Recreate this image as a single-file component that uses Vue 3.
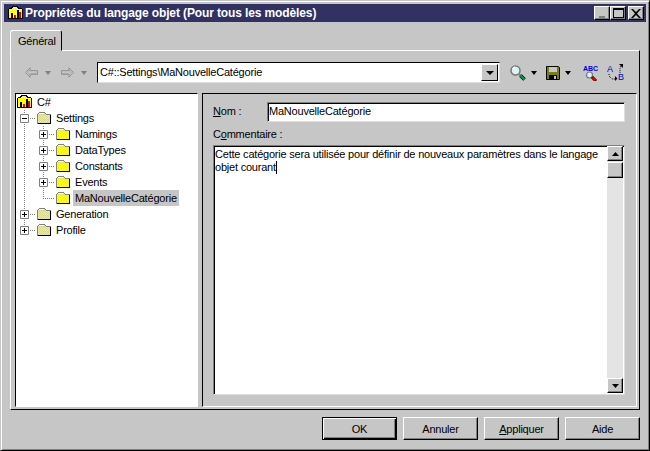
<script setup>
const checker = (x0, y0, w, h) => {
  let d = ''
  for (let y = y0; y < y0 + h; y++) {
    for (let x = x0; x < x0 + w; x++) {
      if ((x + y) % 2 === 0) d += `M${x} ${y}h1v1h-1z`
    }
  }
  return d
}
const folderDither = checker(2, 4, 12, 8)
const modelDither = checker(1, 3, 13, 9)

const tree = [
  { label: 'C#', depth: 0, icon: 'model' },
  { label: 'Settings', depth: 0, icon: 'gray', box: 'minus' },
  { label: 'Namings', depth: 1, icon: 'yellow', box: 'plus' },
  { label: 'DataTypes', depth: 1, icon: 'yellow', box: 'plus' },
  { label: 'Constants', depth: 1, icon: 'yellow', box: 'plus' },
  { label: 'Events', depth: 1, icon: 'yellow', box: 'plus' },
  { label: 'MaNouvelleCatégorie', depth: 1, icon: 'yellow', selected: true },
  { label: 'Generation', depth: 0, icon: 'gray', box: 'plus' },
  { label: 'Profile', depth: 0, icon: 'gray', box: 'plus' },
]
</script>

<template>
  <div class="window">
    <div class="titlebar">
      <svg class="appicon" width="15" height="14" viewBox="0 0 15 14" shape-rendering="crispEdges">
        <path d="M.5 3.500l1-1h2l1-2h5l1 2h3l1 1v9h-14z" fill="#e4e4e4" stroke="#000"/>
        <path :d="modelDither" fill="#ffff00"/>
        <path d="M3 7h2v5H3z" fill="#000"/><path d="M6 9h2v3H6z" fill="#e00000"/><path d="M9 4h2v8H9z" fill="#000"/><path d="M11 6h2v6h-2z" fill="#e00000"/>
      </svg>
      <span class="title">Propriétés du langage objet (Pour tous les modèles)</span>
      <div class="caption-btns">
        <span class="cap"><i class="min"></i></span>
        <span class="cap"><i class="max"></i></span>
        <span class="cap close"><svg width="10" height="9" viewBox="0 0 10 9"><path d="M0 0h2l3 3 3-3h2L6 4.500 10 9H8L5 6 2 9H0l4-4.500z" fill="#000"/></svg></span>
      </div>
    </div>

    <div class="body">
      <div class="tabs"><div class="tab">Général</div></div>
      <div class="panel">
        <div class="toolbar">
          <div class="nav">
            <svg width="14" height="11" viewBox="0 0 14 11"><path d="M5.500.500L.5 5.500l5 5v-3h8v-4h-8z" fill="#c6c6c6" stroke="#8c8c8c"/><path d="M5 3L3 5.500l2 2" fill="none" stroke="#a6a6a6"/><path d="M6 6.500h7" stroke="#a6a6a6"/></svg>
            <svg class="drop" width="6" height="4" viewBox="0 0 6 4"><path d="M0 0h6L3 4z" fill="#808080"/></svg>
            <svg width="14" height="11" viewBox="0 0 14 11"><path d="M8.500.500l5 5-5 5v-3h-8v-4h8z" fill="#c6c6c6" stroke="#8c8c8c"/><path d="M9 3l2 2.500-2 2" fill="none" stroke="#a6a6a6"/><path d="M1 6.500h7" stroke="#a6a6a6"/></svg>
            <svg class="drop" width="6" height="4" viewBox="0 0 6 4"><path d="M0 0h6L3 4z" fill="#808080"/></svg>
          </div>
          <div class="combo">
            <span class="combo-text">C#::Settings\MaNouvelleCatégorie</span>
            <span class="combo-btn"><svg width="8" height="4" viewBox="0 0 8 4"><path d="M0 0h8L4 4z" fill="#000"/></svg></span>
          </div>
          <div class="tools">
            <svg class="mag" width="16" height="16" viewBox="0 0 16 16">
              <circle cx="5.500" cy="5.500" r="4.500" fill="#d8f4f4" stroke="#777" stroke-width="1.500"/>
              <path d="M3 4a3 3 0 0 1 2-2" fill="none" stroke="#fff" stroke-width="1.500"/>
              <path d="M9 9l2 2" stroke="#808080" stroke-width="2"/>
              <path d="M10.500 10.500l4 4" stroke="#000" stroke-width="3.500"/>
              <path d="M10.500 10.500l4 4" stroke="#00a050" stroke-width="2.200"/>
            </svg>
            <svg class="drop" width="6" height="4" viewBox="0 0 6 4"><path d="M0 0h6L3 4z" fill="#000"/></svg>
            <svg class="disk" width="14" height="14" viewBox="0 0 14 14">
              <path d="M.5.500h12l1 1v12H.5z" fill="#808000" stroke="#000"/>
              <path d="M3 1h8v5H3z" fill="#c6c6c6"/>
              <path d="M3 9h8v5H3z" fill="#000"/><path d="M8 10h2v3H8z" fill="#c6c6c6"/>
            </svg>
            <svg class="drop" width="6" height="4" viewBox="0 0 6 4"><path d="M0 0h6L3 4z" fill="#000"/></svg>
            <svg class="abc" width="16" height="16" viewBox="0 0 16 16">
              <text x="0" y="6" class="icon-text">ABC</text>
              <circle cx="6.500" cy="10" r="3" fill="#d8f4f4" stroke="#777" stroke-width="1.200"/>
              <path d="M9 12l4 4" stroke="#000" stroke-width="3"/>
              <path d="M9.500 12.500l3 3" stroke="#f00000" stroke-width="2"/>
            </svg>
            <svg class="ab" width="18" height="17" viewBox="0 0 18 17">
              <text x="0" y="8" class="icon-letter">A</text>
              <text x="11" y="16" class="icon-letter">B</text>
              <path d="M2 10v2l3 3h4M14 2l-1 2v5" fill="none" stroke="#000" stroke-dasharray="1 1"/>
              <path d="M8 12v5l2.500-2.500z" fill="#000"/>
              <path d="M12 0h4v4z" fill="#000"/>
            </svg>
          </div>
        </div>

        <div class="content">
          <div class="tree">
            <svg class="guides" width="60" height="140" viewBox="0 0 60 140">
              <path class="dot" d="M8.500 16V136M27.500 32V104"/>
              <path class="dot" d="M8 24.500h12M8 120.500h12M8 136.500h12M27 40.500h12M27 56.500h12M27 72.500h12M27 88.500h12M27 104.500h12"/>
            </svg>
            <div v-for="n in tree" :key="n.label" class="row" :class="'d' + n.depth">
              <span v-if="n.box" class="box">
                <svg width="9" height="9" viewBox="0 0 9 9">
                  <path d="M.5.500h8v8h-8z" fill="#fff" stroke="#808080"/>
                  <path d="M2 4.500h5" stroke="#000"/>
                  <path v-if="n.box === 'plus'" d="M4.500 2v5" stroke="#000"/>
                </svg>
              </span>
              <span v-else-if="n.depth" class="box"></span>
              <svg v-if="n.icon === 'model'" class="model" width="15" height="14" viewBox="0 0 15 14" shape-rendering="crispEdges">
                <path d="M.5 3.500l1-1h2l1-2h5l1 2h3l1 1v9h-14z" fill="#e4e4e4" stroke="#000"/>
                <path :d="modelDither" fill="#ffff00"/>
                <path d="M3 7h2v5H3z" fill="#000"/><path d="M6 9h2v3H6z" fill="#e00000"/><path d="M9 4h2v8H9z" fill="#000"/><path d="M11 6h2v6h-2z" fill="#e00000"/>
              </svg>
              <svg v-else class="folder" width="16" height="14" viewBox="0 0 16 14" shape-rendering="crispEdges">
                <path d="M1.500 3.500l2-2h5l2 2h3.500v8.500h-12.500z" :fill="n.icon === 'yellow' ? '#e8e870' : '#dcdc90'" stroke="#808080"/>
                <path :d="folderDither" fill="#ffff00"/>
                <path d="M3 2.500h5" stroke="#fff"/>
                <path d="M1.500 12.500h13M14.500 4v9" stroke="#000"/>
              </svg>
              <span class="label" :class="{ selected: n.selected }">{{ n.label }}</span>
            </div>
          </div>

          <div class="detail">
            <div class="field-row">
              <label class="nom"><u>N</u>om :</label>
              <div class="input">MaNouvelleCatégorie</div>
            </div>
            <div class="comment-label">C<u>o</u>mmentaire :</div>
            <div class="textarea">
              <div class="text">Cette catégorie sera utilisée pour définir de nouveaux paramètres dans le langage objet courant<span class="caret"></span></div>
              <div class="scrollbar">
                <span class="sb-btn"><svg width="7" height="4" viewBox="0 0 7 4"><path d="M3.500 0L7 4H0z" fill="#000"/></svg></span>
                <span class="sb-btn thumb"></span>
                <span class="sb-track"></span>
                <span class="sb-btn"><svg width="7" height="4" viewBox="0 0 7 4"><path d="M0 0h7L3.500 4z" fill="#000"/></svg></span>
              </div>
            </div>
          </div>
        </div>
      </div>
      <div class="footer">
        <button class="btn default">OK</button>
        <button class="btn">Annuler</button>
        <button class="btn"><u>A</u>ppliquer</button>
        <button class="btn">Aide</button>
      </div>
    </div>
  </div>
</template>

<style>
html, body { margin: 0; background: #c6c6c6; }
</style>

<style scoped>
.window {
  width: 650px; height: 451px; box-sizing: border-box; background: #c6c6c6;
  border: 1px solid; border-color: #c6c6c6 #000 #000 #c6c6c6;
  box-shadow: inset 1px 1px 0 #fff, inset -1px -1px 0 #808080;
  padding: 3px; font: 11px/1.2 "Liberation Sans", Arial, sans-serif; letter-spacing: -.21px; color: #000;
  display: flex; flex-direction: column; overflow: hidden;
}
.titlebar { height: 18px; background: #313163; color: #fff; display: flex; align-items: center; padding: 0 2px 0 4px; flex: none; }
.appicon { flex: none; margin-right: 2px; }
.title { font: 700 12px "Liberation Sans", Arial, sans-serif; flex: 1; white-space: nowrap; letter-spacing: -.12px; }
.caption-btns { display: flex; }
.cap { width: 16px; height: 14px; box-sizing: border-box; background: #c6c6c6; border: 1px solid; border-color: #fff #000 #000 #fff; box-shadow: inset -1px -1px 0 #808080; display: flex; align-items: center; justify-content: center; }
.close { margin-left: 2px; }
.min { width: 6px; height: 2px; background: #808080; margin-top: 7px; margin-right: 1px; }
.max { width: 9px; height: 7px; border: 1px solid #000; border-top-width: 2px; box-sizing: content-box; }

.body { flex: 1; min-height: 0; display: flex; flex-direction: column; padding: 7px 6px 0 6px; }
.tabs { height: 21px; display: flex; align-items: flex-end; flex: none; }
.tab { height: 21px; box-sizing: border-box; width: 52px; background: #c6c6c6; border: 1px solid; border-color: #fff #000 #c6c6c6 #fff; border-radius: 3px 3px 0 0; padding: 4px 0 0 7px; margin-bottom: -1px; position: relative; z-index: 1; }
.panel { height: 360px; box-sizing: border-box; flex: none; border: 1px solid; border-color: #fff #000 #000 #fff; padding: 0 2px 0 4px; display: flex; flex-direction: column; }
.toolbar { height: 42px; display: flex; align-items: center; flex: none; padding-top: 1px; box-sizing: border-box; }
.nav { width: 82px; padding-left: 10px; box-sizing: border-box; display: flex; align-items: center; flex: none; }
.drop { margin: 0 10px 0 7px; flex: none; }
.combo { width: 403px; height: 21px; box-sizing: border-box; background: #fff; border: 1px solid; border-color: #000 #dedede #dedede #000; display: flex; align-items: center; padding-left: 2px; flex: none; }
.combo-text { flex: 1; }
.combo-btn { width: 17px; height: 17px; background: #c6c6c6; border: 1px solid; border-color: #fff #000 #000 #fff; display: flex; align-items: center; justify-content: center; box-sizing: border-box; margin-right: 1px; }
.tools { display: flex; align-items: center; padding-left: 10px; }
.tools .drop { margin: 0 9px 0 5px; }
.abc { margin-left: 3px; }
.ab { margin-left: 8px; }
.icon-text { font: 700 7px "Liberation Sans", sans-serif; fill: #0000e0; letter-spacing: 0; }
.icon-letter { font: 9px "Liberation Sans", sans-serif; fill: #0000c0; letter-spacing: 0; }

.content { flex: 1; min-height: 0; display: flex; gap: 4px; padding-bottom: 2px; }
.tree { width: 183px; flex: none; box-sizing: border-box; background: #fff; border: 1px solid; border-color: #000 #fff #fff #000; padding: 0 0 0 1px; position: relative; }
.guides { position: absolute; left: 0; top: 0; }
.dot { fill: none; stroke: #808080; stroke-width: 1; stroke-dasharray: 1 1; }
.row { height: 16px; display: flex; align-items: center; position: relative; white-space: nowrap; padding-left: 3px; }
.d1 { padding-left: 22px; }
.box { width: 9px; height: 9px; flex: none; margin-right: 7px; line-height: 0; }
.model { flex: none; margin-left: -3px; margin-right: 3px; }
.folder { flex: none; }
.label { margin-left: 2px; padding: 0 2px; height: 16px; line-height: 16px; }
.model + .label { margin-left: 0; }
.selected { background: #c6c6c6; }
.detail { flex: 1; min-width: 0; border: 1px solid; border-color: #000 #fff #fff #000; display: flex; flex-direction: column; padding: 8px 11px 11px 10px; }
.field-row { display: flex; align-items: center; height: 20px; flex: none; }
.nom { width: 54px; flex: none; }
.input { flex: 1; height: 20px; box-sizing: border-box; background: #fff; border: 1px solid; border-color: #808080 #dedede #dedede #808080; box-shadow: inset 1px 1px 0 #000; padding: 1px 0 0 1px; line-height: 15px; }
.comment-label { margin-top: 4px; height: 19px; line-height: 16px; flex: none; }
.textarea { flex: 1; min-height: 0; display: flex; background: #fff; border: 1px solid; border-color: #808080 #dedede #dedede #808080; box-shadow: inset 1px 1px 0 #000; padding: 0 1px 1px 0; }
.text { flex: 1; padding: 2px 0 0 1px; line-height: 13px; }
.caret { display: inline-block; width: 1px; height: 13px; background: #000; vertical-align: top; }
.scrollbar { width: 16px; display: flex; flex-direction: column; flex: none; background: #e4e4e4; }
.sb-btn { height: 15px; box-sizing: border-box; background: #c6c6c6; border: 1px solid; border-color: #fff #000 #000 #fff; box-shadow: inset -1px -1px 0 #808080; display: flex; align-items: center; justify-content: center; flex: none; }
.thumb { height: 16px; margin-top: 1px; }
.sb-track { flex: 1; }

.footer { height: 39px; display: flex; justify-content: flex-end; padding: 7px 0 0 0; gap: 6px; flex: none; box-sizing: border-box; }
.btn { width: 75px; height: 23px; margin: 0; padding: 0; box-sizing: border-box; background: #c6c6c6; border: 1px solid; border-color: #fff #000 #000 #fff; box-shadow: inset -1px -1px 0 #808080; font: 11px "Liberation Sans", Arial, sans-serif; letter-spacing: -.21px; color: #000; }
.btn.default { border-color: #000; box-shadow: inset 1px 1px 0 #fff, inset -1px -1px 0 #000, inset -2px -2px 0 #808080; }
</style>
